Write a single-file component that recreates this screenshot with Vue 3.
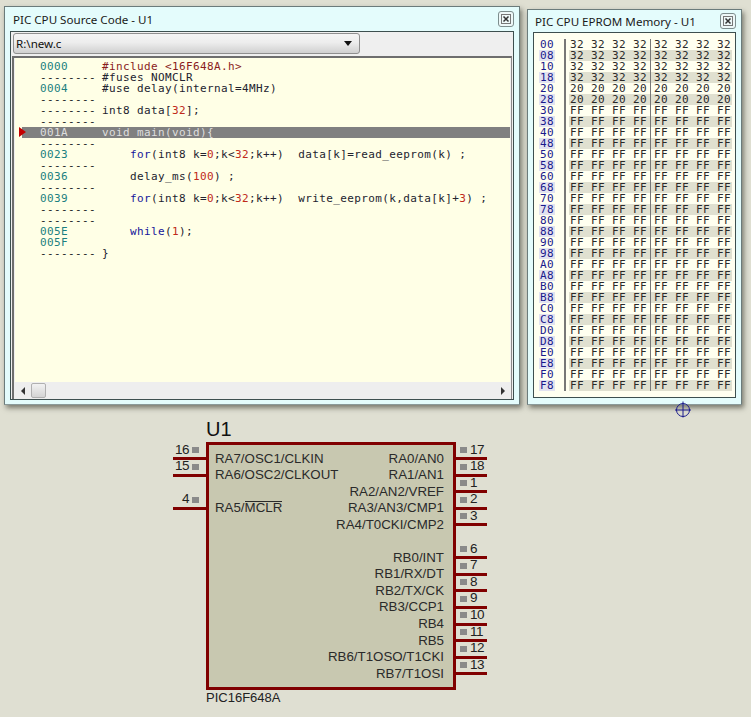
<script setup>
// one entry per source line: address, then coloured pieces of the C source
const D = '--------'
const sourceLines = [
  { addr: '0000', src: [['#include <16F648A.h>', 'inc']] },
  { addr: D, src: [['#fuses NOMCLR', '']] },
  { addr: '0004', src: [['#use delay(internal=4MHz)', '']] },
  { addr: D, src: [] },
  { addr: D, src: [['int8 data[', ''], ['32', 'num'], ['];', '']] },
  { addr: D, src: [] },
  { addr: '001A', src: [['void main(void){', '']], current: true },
  { addr: D, src: [] },
  { addr: '0023', src: [['    ', ''], ['for', 'kw'], ['(int8 k=', ''], ['0', 'num'], [';k<', ''], ['32', 'num'], [';k++)  data[k]=read_eeprom(k) ;', '']] },
  { addr: D, src: [] },
  { addr: '0036', src: [['    delay_ms(', ''], ['100', 'num'], [') ;', '']] },
  { addr: D, src: [] },
  { addr: '0039', src: [['    ', ''], ['for', 'kw'], ['(int8 k=', ''], ['0', 'num'], [';k<', ''], ['32', 'num'], [';k++)  write_eeprom(k,data[k]+', ''], ['3', 'num'], [') ;', '']] },
  { addr: D, src: [] },
  { addr: D, src: [] },
  { addr: '005E', src: [['    ', ''], ['while', 'kw'], ['(', ''], ['1', 'num'], [');', '']] },
  { addr: '005F', src: [] },
  { addr: D, src: [['}', '']] }
]

const memoryRows = Array.from({ length: 32 }, (_, i) => {
  const value = i < 4 ? '32' : i < 6 ? '20' : 'FF'
  return { addr: (i * 8).toString(16).toUpperCase().padStart(2, '0'), value: Array(4).fill(value).join(' ') }
})

const leftPins = [
  { num: '16', label: 'RA7/OSC1/CLKIN' },
  { num: '15', label: 'RA6/OSC2/CLKOUT' },
  null,
  { num: '4', label: 'RA5/', bar: 'MCLR' }
]

const rightPins = [
  { num: '17', label: 'RA0/AN0' },
  { num: '18', label: 'RA1/AN1' },
  { num: '1', label: 'RA2/AN2/VREF' },
  { num: '2', label: 'RA3/AN3/CMP1' },
  { num: '3', label: 'RA4/T0CKI/CMP2' },
  null,
  { num: '6', label: 'RB0/INT' },
  { num: '7', label: 'RB1/RX/DT' },
  { num: '8', label: 'RB2/TX/CK' },
  { num: '9', label: 'RB3/CCP1' },
  { num: '10', label: 'RB4' },
  { num: '11', label: 'RB5' },
  { num: '12', label: 'RB6/T1OSO/T1CKI' },
  { num: '13', label: 'RB7/T1OSI' }
]
</script>

<template>
  <div class="desktop">
    <!-- source code window -->
    <section class="window source-window">
      <header class="title-bar">
        <span>PIC CPU Source Code - U1</span>
        <button class="close"><svg width="10" height="10" viewBox="0 0 10 10"><rect x="0.5" y="0.5" width="9" height="9" fill="none" stroke="#777" /><path d="M2.5 2.5l5 5M7.5 2.5l-5 5" stroke="#333" stroke-width="1.5" /></svg></button>
      </header>
      <div class="panel">
        <div class="combo-row">
          <div class="combo">
            <span>R:\new.c</span>
            <i class="combo-arrow"></i>
          </div>
        </div>
        <div class="code-frame">
          <div class="code">
            <div v-for="(line, i) in sourceLines" :key="i" class="code-line" :class="{ current: line.current }">
              <i v-if="line.current" class="pc-arrow"></i>
              <span class="addr" :class="{ dashes: line.addr === D }">{{ line.addr }}</span>
              <span class="src"><span v-for="(part, j) in line.src" :key="j" :class="part[1]">{{ part[0] }}</span></span>
            </div>
          </div>
          <div class="scrollbar">
            <i class="arrow-left"></i>
            <div class="thumb"></div>
            <i class="arrow-right"></i>
          </div>
        </div>
      </div>
    </section>

    <!-- eprom window -->
    <section class="window memory-window">
      <header class="title-bar">
        <span>PIC CPU EPROM Memory - U1</span>
        <button class="close"><svg width="10" height="10" viewBox="0 0 10 10"><rect x="0.5" y="0.5" width="9" height="9" fill="none" stroke="#777" /><path d="M2.5 2.5l5 5M7.5 2.5l-5 5" stroke="#333" stroke-width="1.5" /></svg></button>
      </header>
      <div class="panel memory">
        <div v-for="(row, i) in memoryRows" :key="row.addr" class="mem-row" :class="{ odd: i % 2 === 1 }">
          <span class="mem-addr">{{ row.addr }}</span>
          <span class="mem-sep"></span>
          <span class="mem-group">{{ row.value }}</span>
          <span class="mem-group second">{{ row.value }}</span>
        </div>
      </div>
    </section>

    <svg class="origin" width="18" height="18" viewBox="0 0 18 18">
      <circle cx="9" cy="9" r="6.5" fill="none" stroke="#1a1a8c" />
      <path d="M9 0.5v16M1 9h16" stroke="#1a1a8c" />
    </svg>

    <!-- schematic part -->
    <div class="part">
      <div class="ref">U1</div>
      <div class="part-row">
        <div class="pins left">
          <div v-for="(pin, i) in leftPins" :key="i" class="pin" :class="{ empty: !pin }">
            <template v-if="pin">
              <span class="pin-num">{{ pin.num }}</span>
              <i class="pin-mark"></i>
            </template>
          </div>
        </div>
        <div class="chip">
          <div class="labels">
            <div v-for="(pin, i) in leftPins" :key="i" class="label">
              <template v-if="pin">{{ pin.label }}<span v-if="pin.bar" class="overbar">{{ pin.bar }}</span></template>
            </div>
          </div>
          <div class="labels right">
            <div v-for="(pin, i) in rightPins" :key="i" class="label">
              <template v-if="pin">{{ pin.label }}</template>
            </div>
          </div>
        </div>
        <div class="pins right">
          <div v-for="(pin, i) in rightPins" :key="i" class="pin" :class="{ empty: !pin }">
            <template v-if="pin">
              <i class="pin-mark"></i>
              <span class="pin-num">{{ pin.num }}</span>
            </template>
          </div>
        </div>
      </div>
      <div class="part-name">PIC16F648A</div>
    </div>
  </div>
</template>

<style>
html, body {
  margin: 0;
  background: #dfdfd2;
}
</style>

<style scoped>
.desktop {
  position: relative;
  width: 751px;
  height: 717px;
  overflow: hidden;
  background: #dfdfd2;
  font-family: "Liberation Sans", Arial, sans-serif;
  color: #222;
}

.window {
  position: absolute;
  box-sizing: border-box;
  display: flex;
  flex-direction: column;
  background: #e4fcfc;
  border: 1px solid #6b7b7b;
  border-bottom-color: #8a9a9a;
  box-shadow: 2px 3px 5px rgba(40, 40, 30, 0.55);
}

.source-window {
  left: 4px;
  top: 6px;
  width: 516px;
  height: 399px;
}

.memory-window {
  left: 527px;
  top: 9px;
  width: 215px;
  height: 396px;
}

.title-bar {
  display: flex;
  align-items: center;
  justify-content: space-between;
  box-sizing: border-box;
  height: 24px;
  padding: 0 5px 0 8px;
  font-family: "Noto Sans", sans-serif;
  font-size: 11.6px;
  color: #1a1a1a;
}

.memory-window .title-bar {
  height: 22px;
  padding-left: 7px;
}

.close {
  display: flex;
  align-items: center;
  justify-content: center;
  box-sizing: border-box;
  width: 16px;
  height: 16px;
  padding: 0;
  border: 1px solid #7d8d8d;
  border-radius: 3px;
  background: #eef8f8;
}

.panel {
  box-sizing: border-box;
  margin: 0 5px;
  border: 1px solid #3d4f4f;
  background: #efefef;
}

.source-window .panel {
  height: 369px;
}

.combo-row {
  box-sizing: border-box;
  height: 24px;
  padding: 1px 0 0 2px;
}

.combo {
  display: flex;
  align-items: center;
  justify-content: space-between;
  box-sizing: border-box;
  width: 347px;
  height: 21px;
  padding: 0 7px 0 2px;
  border: 1px solid #8f8f8f;
  border-radius: 3px;
  background: linear-gradient(#f4f4f4, #ededed 45%, #d0d0d0);
  font-family: "Noto Sans", sans-serif;
  font-size: 11.6px;
  color: #111;
}

.combo-arrow {
  border: 4px solid transparent;
  border-top: 5px solid #111;
  border-bottom: 0;
}

.code-frame {
  display: flex;
  flex-direction: column;
  box-sizing: border-box;
  height: 343px;
  margin-left: 1px;
  margin-right: 1px;
  border-top: 2px solid #6e6e6e;
  border-left: 2px solid #6e6e6e;
  border-right: 1px solid #8a8a8a;
}

.code {
  flex: 1;
  box-sizing: border-box;
  margin-left: 1px;
  margin-right: 1px;
  padding: 3px 0 0 0;
  background: #ffffe6;
  font-family: "DejaVu Sans Mono", monospace;
  font-size: 11px;
  letter-spacing: 0.38px;
  line-height: 11px;
  color: #23232f;
}

.code-line {
  position: relative;
  display: flex;
  height: 11px;
  white-space: pre;
}

.code-line.current {
  margin-left: 7px;
  background: #808080;
  color: #dedede;
}

.code-line.current .addr {
  margin-left: -7px;
  color: #dedede;
}

.pc-arrow {
  position: absolute;
  left: -3px;
  top: 0;
  border-left: 7px solid #c40000;
  border-top: 5.5px solid transparent;
  border-bottom: 5.5px solid transparent;
}

.addr {
  box-sizing: border-box;
  width: 87px;
  padding-left: 25px;
  color: #1b8080;
}

.addr.dashes {
  color: #222;
}

.inc {
  color: #8a1c1c;
}

.num {
  color: #c02a1a;
}

.kw {
  color: #16169a;
}

.scrollbar {
  display: flex;
  align-items: center;
  height: 17px;
  flex: none;
  background: #eeeeee;
}

.arrow-left {
  margin-left: 7px;
  border: 4px solid transparent;
  border-right: 4px solid #333;
  border-left: 0;
}

.thumb {
  box-sizing: border-box;
  width: 15px;
  height: 15px;
  margin-left: 6px;
  border: 1px solid #b0b0b0;
  border-radius: 2px;
  background: linear-gradient(#f2f2f2, #d4d4d4);
}

.arrow-right {
  margin-left: auto;
  margin-right: 6px;
  border: 4px solid transparent;
  border-left: 4px solid #333;
  border-right: 0;
}

.memory {
  height: 366px;
  padding-top: 6px;
  background: #fffff0;
  font-family: "DejaVu Sans Mono", monospace;
  font-size: 11px;
  letter-spacing: 0.38px;
  line-height: 11px;
  color: #2a2a2a;
}

.mem-row {
  display: flex;
  height: 11px;
  white-space: pre;
}

.mem-addr {
  box-sizing: border-box;
  width: 16px;
  margin-left: 5px;
  padding-left: 1px;
  color: #1a1a8c;
}

.mem-sep {
  width: 2px;
  margin: 0 3px 0 9px;
  background: #777;
}

.mem-group {
  box-sizing: border-box;
  width: 81px;
  padding-left: 1px;
}

.mem-group.second {
  width: 82px;
  padding-left: 3px;
  border-left: 1px solid #777;
}

.mem-row.odd .mem-addr {
  background: #e2e2f0;
}

.mem-row.odd .mem-group {
  background: #e0e0d0;
}

.origin {
  position: absolute;
  left: 674px;
  top: 401px;
}

.part {
  position: absolute;
  left: 173px;
  top: 419px;
}

.ref {
  height: 23px;
  margin-left: 33px;
  font-size: 20px;
  line-height: 21px;
  color: #111;
}

.part-row {
  display: flex;
  align-items: flex-start;
}

.pins {
  box-sizing: border-box;
  width: 33px;
  padding-top: 1.5px;
}

.pins.right {
  width: 31px;
}

.pin {
  display: flex;
  justify-content: flex-end;
  box-sizing: border-box;
  height: 16.55px;
  border-bottom: 3px solid #800000;
}

.pin.empty {
  border-bottom-color: transparent;
}

.pins.right .pin {
  justify-content: flex-start;
}

.pin-num {
  margin-top: -1px;
  font-size: 13.5px;
  line-height: 13px;
  letter-spacing: -0.5px;
  color: #222;
}

.pin-mark {
  flex: none;
  width: 7px;
  height: 6px;
  margin: 3.5px 7px 0 3px;
  background: #8a8a8a;
}

.pins.right .pin-mark {
  margin: 3.5px 3px 0 4px;
}

.chip {
  display: flex;
  justify-content: space-between;
  box-sizing: border-box;
  width: 250px;
  height: 248px;
  padding: 5.5px 9px 0 6px;
  border: 3px solid #800000;
  background: #c8c8b0;
}

.labels {
  width: 100px;
}

.labels.right {
  width: 132px;
}

.label {
  height: 16.55px;
  font-size: 13.3px;
  line-height: 16.55px;
  white-space: nowrap;
  color: #2a2a2a;
}

.labels.right .label {
  text-align: right;
}

.overbar {
  display: inline-block;
  border-top: 1.5px solid #2a2a2a;
  line-height: 12px;
}

.part-name {
  margin: 0 0 0 33px;
  font-size: 13px;
  line-height: 15px;
  color: #222;
}
</style>
